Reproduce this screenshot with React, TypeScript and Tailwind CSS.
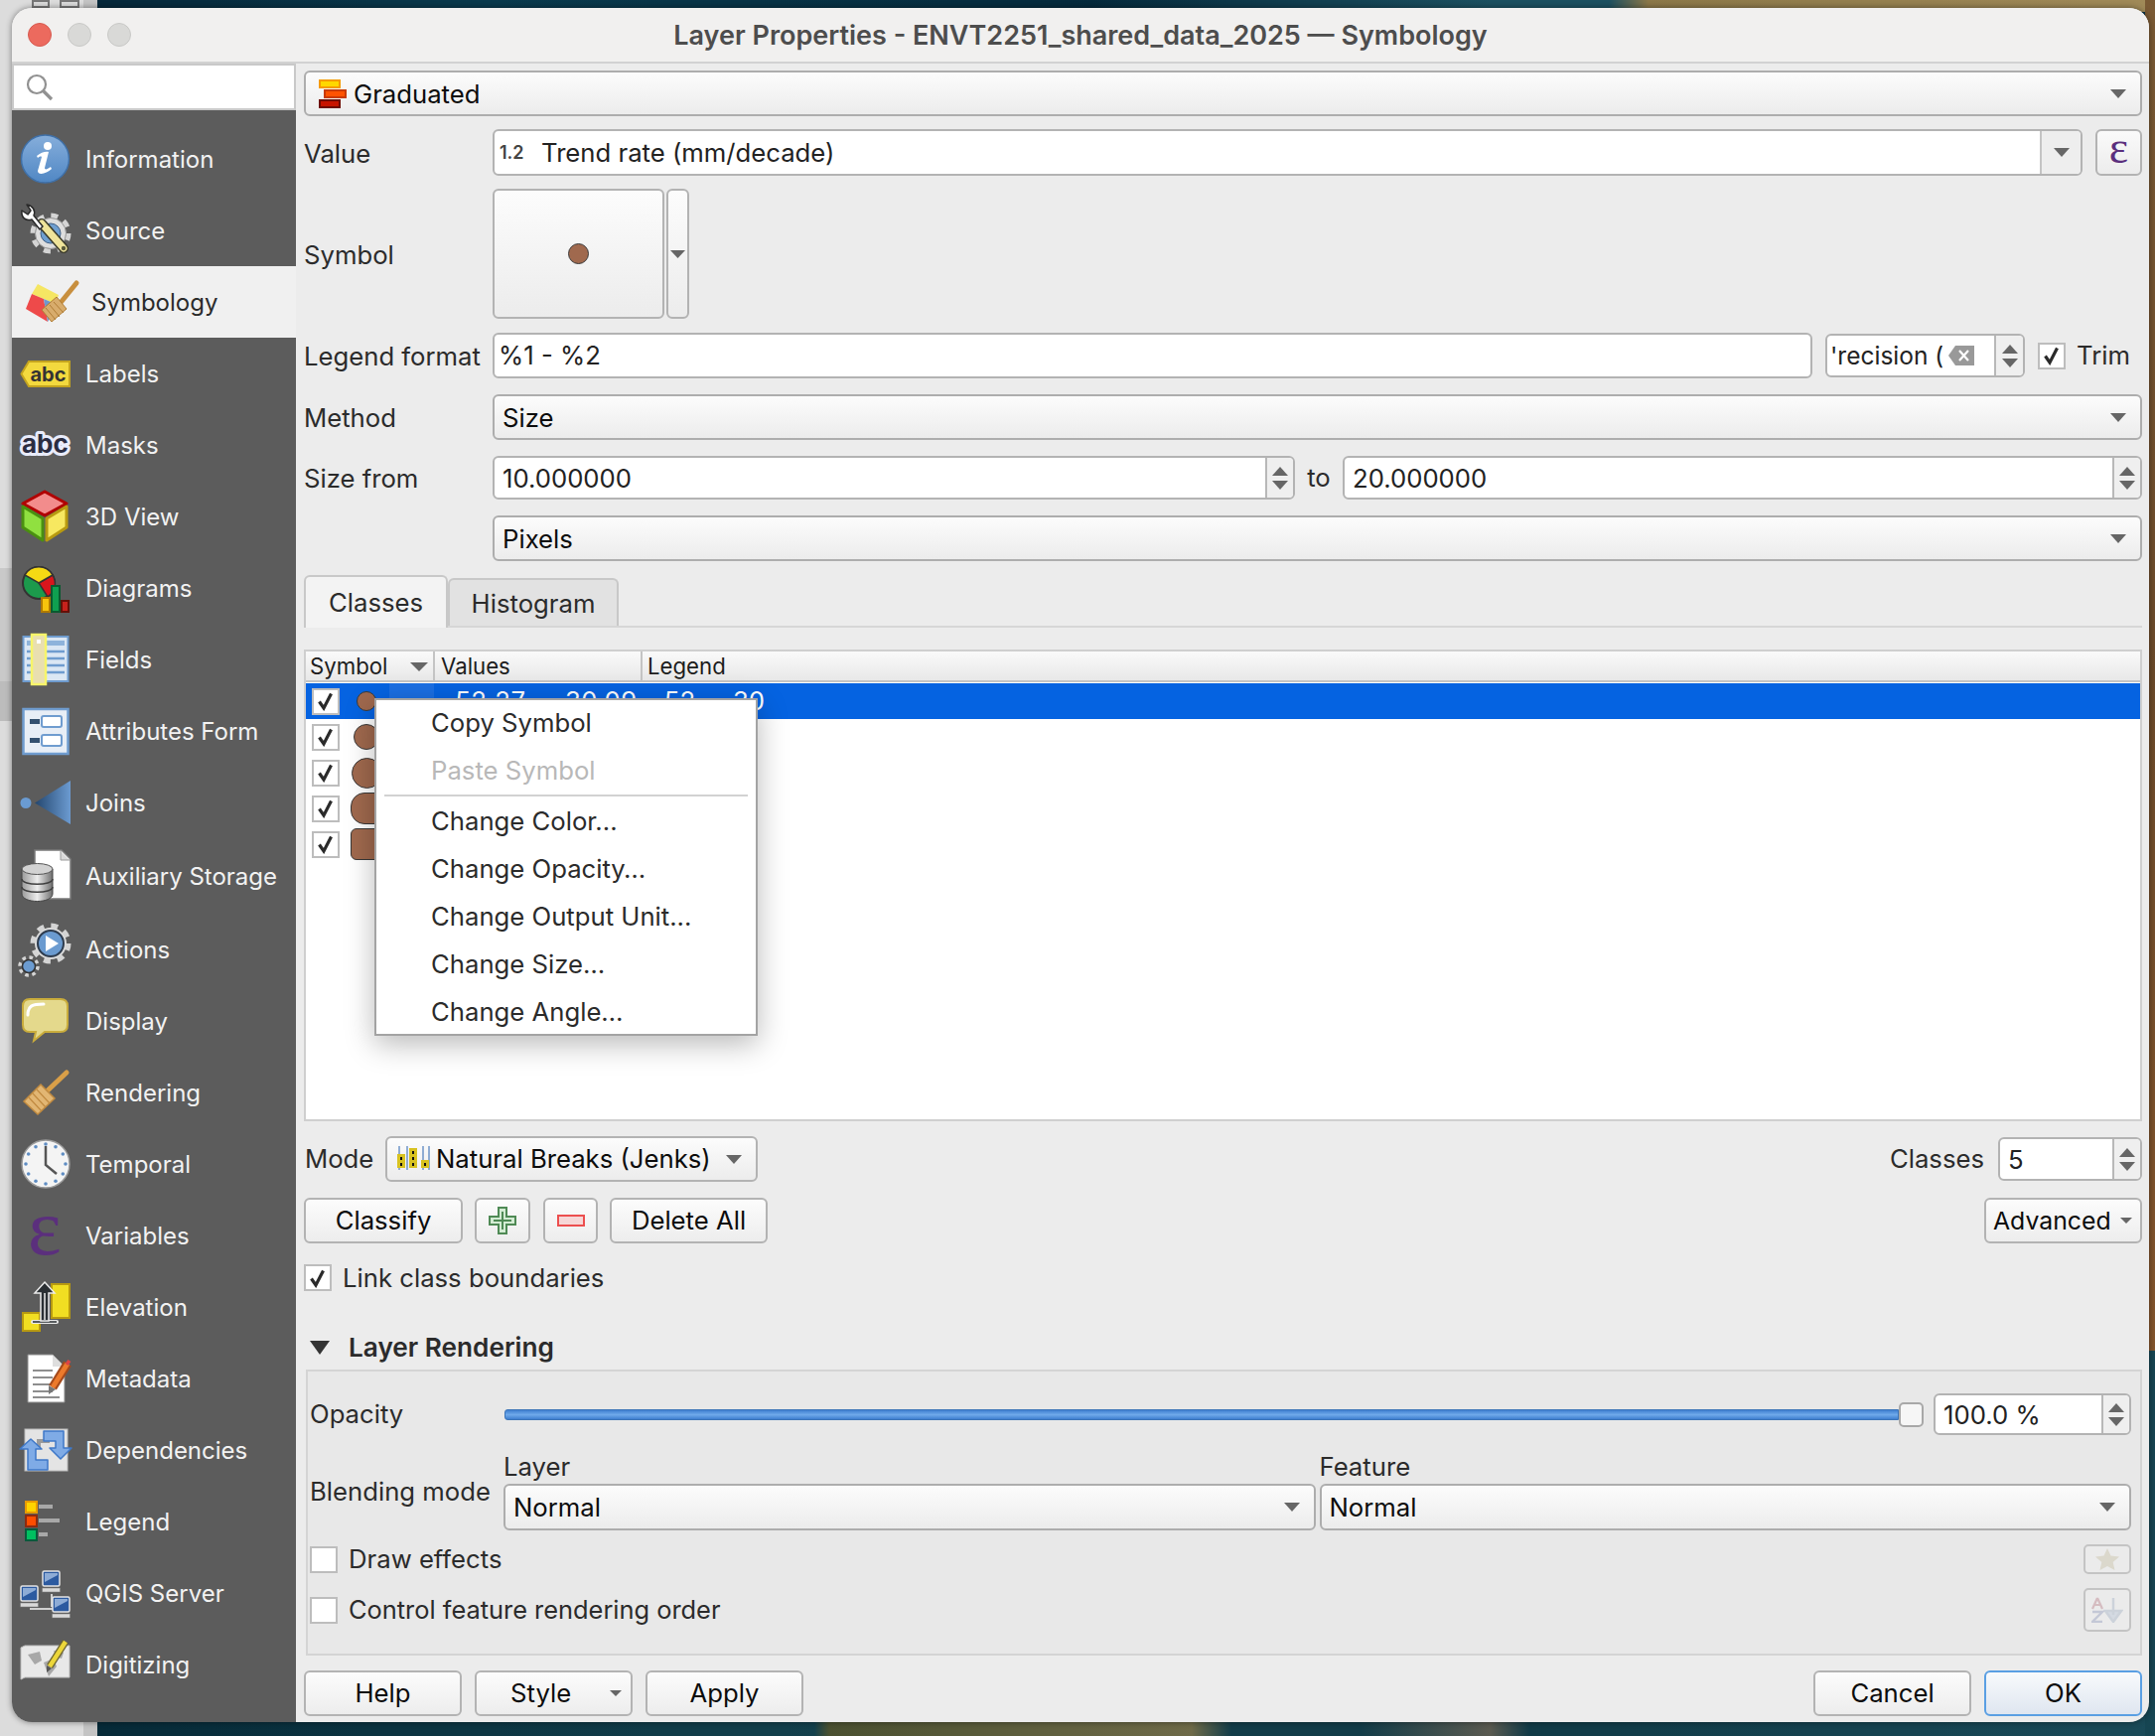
import React from "react";

const Tri = ({ w = 16, h = 9, c = "#666", up = false }: { w?: number; h?: number; c?: string; up?: boolean }) => (
  <svg width={w} height={h} viewBox="0 0 16 9" preserveAspectRatio="none" className="shrink-0">
    <path d={up ? "M8 0L16 9H0Z" : "M0 0H16L8 9Z"} fill={c} />
  </svg>
);

const Check = () => (
  <svg width="20" height="20" viewBox="0 0 20 20">
    <path d="M3.5 10.5 L8 17 L15.5 2.5" fill="none" stroke="#2a2a2a" strokeWidth="3.2" strokeLinejoin="miter" />
  </svg>
);

const Box = ({ on = false }: { on?: boolean }) => (
  <div className="w-[28px] h-[27px] shrink-0 bg-white border-2 border-[#bdbdbd] flex items-center justify-center">
    {on && <Check />}
  </div>
);

const Combo = ({ children, className = "" }: { children: React.ReactNode; className?: string }) => (
  <div className={"rounded-[6px] border-2 border-[#adadad] bg-[linear-gradient(#fcfcfc,#ececec)] flex items-center pl-[8px] pr-[14px] justify-between text-[#0c0c0c] " + className}>
    <div className="flex items-center min-w-0 pt-[1px]">{children}</div>
    <Tri />
  </div>
);

const Spin = ({ value, className = "", inner = "" }: { value: string; className?: string; inner?: string }) => (
  <div className={"rounded-[6px] border-2 border-[#b3b3b3] bg-white flex items-stretch overflow-hidden " + className}>
    <div className={"flex-1 flex items-center pl-[8px] pt-[1px] text-[#222] " + inner}>{value}</div>
    <div className="w-[28px] border-l-2 border-[#b8b8b8] bg-[#efefef] flex flex-col items-center justify-center gap-[5px]">
      <Tri up w={16} h={9} c="#666" />
      <Tri w={16} h={9} c="#666" />
    </div>
  </div>
);

const Btn = ({ children, className = "" }: { children: React.ReactNode; className?: string }) => (
  <div className={"h-[46px] rounded-[6px] border-2 flex items-center justify-center text-[#0c0c0c] shrink-0 " + className}>
    {children}
  </div>
);
const plain = "border-[#b3b3b3] bg-[linear-gradient(#fcfcfc,#ededed)] ";

const Ic = ({ children }: { children: React.ReactNode }) => (
  <svg width="52" height="56" viewBox="0 0 52 56" className="shrink-0 overflow-visible">
    {children}
  </svg>
);

const sans = "Inter, sans-serif";

const icons: Record<string, React.ReactNode> = {
  Information: (
    <Ic>
      <defs>
        <linearGradient id="gi" x1="0" y1="0" x2="0" y2="1">
          <stop offset="0" stopColor="#86aedb" />
          <stop offset="1" stopColor="#5087c4" />
        </linearGradient>
      </defs>
      <circle cx="25.5" cy="28" r="24" fill="url(#gi)" stroke="#3f70a8" strokeWidth="1.5" />
      <circle cx="28" cy="15" r="4" fill="#fff" />
      <path d="M17 25 C21 21 27 20 29 21 L25 37 C25 39 27 39 31 36 L32 38 C27 43 18 45 18 40 L22 26 C21 25 19 26 18 27 Z" fill="#fff" />
    </Ic>
  ),
  Source: (
    <Ic>
      <circle cx="31" cy="31" r="18" fill="none" stroke="#d4d4d4" strokeWidth="5" strokeDasharray="7 7.1" />
      <circle cx="31" cy="31" r="15.5" fill="#dedede" stroke="#9a9a9a" />
      <circle cx="31" cy="31" r="10" fill="#6f9fd0" stroke="#3e5f86" />
      <path d="M22 21 L44 46" stroke="#3a3a2a" strokeWidth="10" strokeLinecap="round" />
      <path d="M22 21 L44 46" stroke="#efe49a" strokeWidth="7" strokeLinecap="round" />
      <circle cx="44" cy="46" r="2.2" fill="#5a5a3a" />
      <path d="M23 24 L14 13 C16 8 13 3 7 2 L11 8 L8 12 L2 8 C1 15 6 19 12 17 L20 27 Z" fill="#fff" stroke="#2a2a2a" strokeWidth="1.5" strokeLinejoin="round" />
    </Ic>
  ),
  Symbology: (
    <Ic>
      <path d="M12 10 L33 21 L30 30 L6 20 Z" fill="#f5e663" />
      <path d="M6 20 L18 25 L22 48 L0 35 Z" fill="#ee4a4a" />
      <path d="M18 25 L30 30 L27 40 L22 48 Z" fill="#6f97cf" />
      <path d="M34 30 L51 9" stroke="#c88f3e" strokeWidth="5" strokeLinecap="round" />
      <path d="M16 36 L31 23 L41 35 L26 48 Z" fill="#d8ac6c" stroke="#b07d35" strokeWidth="1" />
      <path d="M20 34 L30 46 M24 31 L34 43 M28 28 L38 39" stroke="#b07d35" strokeWidth="1" />
    </Ic>
  ),
  Labels: (
    <Ic>
      <path d="M1.5 28.5 L9 16 H50 V41 H9 Z" fill="#f3d93e" stroke="#c4a41f" strokeWidth="2" />
      <text x="10.5" y="36" fontFamily={sans} fontWeight="700" fontSize="20" fill="#333">abc</text>
    </Ic>
  ),
  Masks: (
    <Ic>
      <text x="2" y="36" fontFamily={sans} fontWeight="700" fontSize="26" fill="#2b2d42" stroke="#e9ecfb" strokeWidth="6" strokeLinejoin="round" paintOrder="stroke">abc</text>
    </Ic>
  ),
  "3D View": (
    <Ic>
      <path d="M25 3 L47 15 L25 27 L3 15 Z" fill="#f28c8c" stroke="#b00000" strokeWidth="3" strokeLinejoin="round" />
      <path d="M3 18 L23 30 V52 L3 39 Z" fill="#90e040" stroke="#4a9010" strokeWidth="3" strokeLinejoin="round" />
      <path d="M27 30 L47 18 V39 L27 52 Z" fill="#f7e860" stroke="#b89a10" strokeWidth="3" strokeLinejoin="round" />
    </Ic>
  ),
  Diagrams: (
    <Ic>
      <circle cx="19" cy="23" r="16" fill="#1c9a4c" stroke="#333" strokeWidth="2" />
      <path d="M19 23 L33 15 A16 16 0 0 1 28 37 Z" fill="#d9151c" stroke="#333" strokeWidth="1.5" />
      <path d="M19 23 L33 15 A16 16 0 0 0 5 15 Z" fill="#f5d914" stroke="#333" strokeWidth="1.5" />
      <rect x="22" y="38" width="8" height="14" fill="#f7c40d" stroke="#b07a00" strokeWidth="2" />
      <rect x="32" y="26" width="8" height="26" fill="#0fa050" stroke="#0a5a30" strokeWidth="2" />
      <rect x="42" y="41" width="7" height="11" fill="#c7221c" stroke="#651008" strokeWidth="2" />
    </Ic>
  ),
  Fields: (
    <Ic>
      <rect x="3.5" y="5" width="45" height="45" fill="#dbe7f4" stroke="#6f9ccf" strokeWidth="2" />
      <rect x="7" y="9" width="38" height="5" fill="#8eb3db" />
      <path d="M7 20H45 M7 27H45 M7 34H45 M7 41H45" stroke="#6f9ccf" strokeWidth="2.5" />
      <rect x="12" y="3" width="14" height="50" fill="#e9dfb0" stroke="#f7f56a" strokeWidth="2.5" />
      <rect x="17" y="8" width="4" height="4" fill="#fff" />
    </Ic>
  ),
  "Attributes Form": (
    <Ic>
      <rect x="3.5" y="6" width="45" height="45" fill="#e8eef6" stroke="#6f9ccf" strokeWidth="2.5" />
      <rect x="10" y="16" width="10" height="5" fill="#34506f" />
      <rect x="10" y="35" width="10" height="5" fill="#34506f" />
      <rect x="22" y="13" width="20" height="11" rx="2" fill="#fff" stroke="#6f9ccf" strokeWidth="2" />
      <rect x="22" y="32" width="20" height="11" rx="2" fill="#fff" stroke="#6f9ccf" strokeWidth="2" />
    </Ic>
  ),
  Joins: (
    <Ic>
      <defs>
        <linearGradient id="gj" x1="0" y1="0" x2="1" y2="0">
          <stop offset="0" stopColor="#23466e" />
          <stop offset="1" stopColor="#6c9bd1" />
        </linearGradient>
      </defs>
      <circle cx="6" cy="28.5" r="5.5" fill="#6a9bd2" />
      <path d="M15 28.5 L51 6 V50 Z" fill="url(#gj)" />
    </Ic>
  ),
  "Auxiliary Storage": (
    <Ic>
      <defs>
        <linearGradient id="ga" x1="0" y1="0" x2="1" y2="0">
          <stop offset="0" stopColor="#9a9a9a" />
          <stop offset=".5" stopColor="#ececec" />
          <stop offset="1" stopColor="#6f6f6f" />
        </linearGradient>
      </defs>
      <path d="M15 2 H42 L51 11 V51 H15 Z" fill="#fff" stroke="#7a7a7a" strokeWidth="1.5" />
      <path d="M41 3 V12 H50" fill="#d9d9d9" stroke="#999" />
      <path d="M2 21 V46 C2 56 33 56 33 46 V21 Z" fill="url(#ga)" stroke="#444" strokeWidth="1" />
      <ellipse cx="17.5" cy="21" rx="15.5" ry="5.5" fill="#d2d2d2" stroke="#555" strokeWidth="1" />
      <path d="M2 31 C2 38 33 38 33 31 M2 39 C2 46 33 46 33 39" fill="none" stroke="#3f3f3f" strokeWidth="1.5" />
    </Ic>
  ),
  Actions: (
    <Ic>
      <circle cx="31" cy="22" r="18" fill="none" stroke="#d4d4d4" strokeWidth="5" strokeDasharray="7 7.1" />
      <circle cx="31" cy="22" r="16" fill="#dcdcdc" />
      <circle cx="31" cy="22" r="13" fill="#6b9bd0" stroke="#2e3c4e" strokeWidth="2" />
      <path d="M26 14 L39 22 L26 30 Z" fill="#fff" />
      <circle cx="9" cy="45" r="9" fill="none" stroke="#d4d4d4" strokeWidth="3.5" strokeDasharray="3.6 3.5" />
      <circle cx="9" cy="45" r="6.5" fill="#6b9bd0" stroke="#333" strokeWidth="1.5" />
    </Ic>
  ),
  Display: (
    <Ic>
      <path d="M10 6 H41 Q48 6 48 13 V32 Q48 39 41 39 H25 L14 48 L16 39 H10 Q3 39 3 32 V13 Q3 6 10 6 Z" fill="#e4d98c" stroke="#c9ac3c" strokeWidth="2" />
      <path d="M8 22 C8 13 12 11 24 11" fill="none" stroke="#fff" strokeWidth="3" strokeLinecap="round" />
    </Ic>
  ),
  Rendering: (
    <Ic>
      <path d="M28 26 L47 8" stroke="#d99f48" strokeWidth="5" strokeLinecap="round" />
      <path d="M4 37 L21 20 L35 34 L18 50 Z" fill="#e2b673" stroke="#c08a40" strokeWidth="1.5" />
      <path d="M9 33 L22 47 M13 29 L26 43 M17 25 L30 39" stroke="#c08a40" strokeWidth="1.2" />
    </Ic>
  ),
  Temporal: (
    <Ic>
      <circle cx="26" cy="28" r="24" fill="#f4f4f4" stroke="#9a9a9a" strokeWidth="1.5" />
      {[...Array(12)].map((_, i) => {
        const a = (i * Math.PI) / 6;
        return <circle key={i} cx={26 + 20 * Math.cos(a)} cy={28 + 20 * Math.sin(a)} r="1.8" fill="#5f8dc3" />;
      })}
      <path d="M26 10 V29 L37 38" fill="none" stroke="#555" strokeWidth="2.5" />
    </Ic>
  ),
  Variables: (
    <Ic>
      <text x="8" y="47" fontFamily="'Liberation Serif', serif" fontSize="80" fill="#5b2f7d">ε</text>
    </Ic>
  ),
  Elevation: (
    <Ic>
      <rect x="32" y="5" width="18" height="34" fill="#f1de22" stroke="#b89a10" strokeWidth="2" />
      <rect x="3" y="34" width="17" height="18" fill="#f1de22" stroke="#b89a10" strokeWidth="2" />
      <path d="M13 43 H37" stroke="#e8e8e8" strokeWidth="4" strokeLinecap="round" />
      <path d="M13 43 H37" stroke="#2a2f33" strokeWidth="1.5" />
      <path d="M25 3 L35 14 H29 V42 H21 V14 H15 Z" fill="#2a2f33" stroke="#ececec" strokeWidth="1.5" />
      <path d="M25 14 V41" stroke="#ececec" strokeWidth="1.5" />
    </Ic>
  ),
  Metadata: (
    <Ic>
      <path d="M8 4 H33 L45 16 V52 H8 Z" fill="#fff" stroke="#8a8a8a" />
      <path d="M33 4 V16 H45" fill="#dedede" />
      <path d="M13 20H33 M13 27H33 M13 34H31 M13 41H33 M13 47H40" stroke="#8e8e8e" strokeWidth="2" />
      <path d="M48 13 L33 37" stroke="#a44a1c" strokeWidth="9" />
      <path d="M48 13 L33 37" stroke="#ec7a2c" strokeWidth="5" />
      <path d="M47 11 L50 13" stroke="#d44" strokeWidth="5" />
      <path d="M29 35 L36 39 L29 44 Z" fill="#777" />
    </Ic>
  ),
  Dependencies: (
    <Ic>
      <rect x="5" y="7" width="43" height="42" fill="#e4e4e4" stroke="#bcbcbc" />
      <path d="M19 27 V19 H30" fill="none" stroke="#9a9a9a" strokeWidth="4" />
      <path d="M0 27 L11 17 L22 27 H16 V38 H28 V48 H8 V27 Z" fill="#7fabe6" stroke="#3f78c8" strokeWidth="1.5" strokeLinejoin="round" />
      <path d="M24 9 H44 V26 H52 L41 37 L30 26 H36 V19 H24 Z" fill="#7fabe6" stroke="#3f78c8" strokeWidth="1.5" strokeLinejoin="round" />
    </Ic>
  ),
  Legend: (
    <Ic>
      <rect x="6" y="8" width="11" height="11" fill="#ffd400" stroke="#e89a00" strokeWidth="2" />
      <rect x="6" y="22" width="11" height="11" fill="#ff4d00" stroke="#8c2a10" strokeWidth="2" />
      <rect x="6" y="36" width="11" height="11" fill="#00c060" stroke="#0a5a3c" strokeWidth="2" />
      <rect x="19" y="11" width="14" height="4" fill="#a8a8a8" />
      <rect x="19" y="25" width="21" height="4" fill="#a8a8a8" />
      <rect x="19" y="39" width="9" height="4" fill="#a8a8a8" />
    </Ic>
  ),
  "QGIS Server": (
    <Ic>
      <path d="M32 29 V42 M10 44 H33" stroke="#cfcfcf" strokeWidth="2" />
      {[[23, 6], [1, 21], [33, 32]].map(([x, y], i) => (
        <g key={i}>
          <rect x={x} y={y} width="17" height="15" rx="1.5" fill="#2c5aa0" stroke="#e4e4e4" strokeWidth="1.5" />
          <path d={`M${x + 2} ${y + 11} L${x + 15} ${y + 4} V${y + 2} H${x + 2} Z`} fill="#8eacd6" />
          <rect x={x - 0.5} y={y + 17} width="18" height="4" fill="#d9d9d9" stroke="#777" strokeWidth=".5" />
        </g>
      ))}
    </Ic>
  ),
  Digitizing: (
    <Ic>
      <path d="M1 11 L5 9 H50 V41 H5 L1 43 Z" fill="#e8e8e8" stroke="#bdbdbd" />
      <path d="M8 18 L20 15 L22 24 L15 28 Z M24 26 L34 22 L37 30 L29 40 Z M34 14 L44 16 L42 22 L36 20 Z" fill="#a8a8a8" />
      <path d="M46 5 L30 30" stroke="#6b6330" strokeWidth="7" />
      <path d="M46 5 L30 30" stroke="#ecd63a" strokeWidth="4.5" />
      <path d="M27 29 L32 32 L27 36 Z" fill="#555" />
    </Ic>
  ),
};

const items = ["Information", "Source", "Symbology", "Labels", "Masks", "3D View", "Diagrams", "Fields", "Attributes Form", "Joins", "Auxiliary Storage", "Actions", "Display", "Rendering", "Temporal", "Variables", "Elevation", "Metadata", "Dependencies", "Legend", "QGIS Server", "Digitizing"];

const Row = ({ label, children, className = "" }: { label: string; children: React.ReactNode; className?: string }) => (
  <div className={"flex items-center " + className}>
    <div className="w-[190px] shrink-0 pt-[2px] text-[#2b2b2b]">{label}</div>
    <div className="flex-1 flex items-center min-w-0">{children}</div>
  </div>
);

const symbols = [
  "w-[20px] h-[20px] rounded-full",
  "w-[26px] h-[26px] rounded-full",
  "w-[31px] h-[31px] rounded-full",
  "w-[32px] h-[32px] rounded-l-[14px]",
  "w-[32px] h-[32px] rounded-l-[6px]",
];

const menu: [string, boolean?][] = [["Copy Symbol"], ["Paste Symbol", true]];
const menu2 = ["Change Color...", "Change Opacity…", "Change Output Unit...", "Change Size…", "Change Angle…"];

export default function App() {
  return (
    <div className="relative w-[2170px] h-[1748px] overflow-hidden bg-[#0c3446] font-['Inter',sans-serif] text-[25.7px] leading-none">
      {/* desktop behind the window */}
      <div className="absolute inset-x-0 top-0 h-[12px] bg-[linear-gradient(90deg,#06283a_100px,#0a3a4d_500px,#052a3c_1100px,#1c5060_1500px,#1c5060_1620px,#8b7748_1660px,#a08a58_2170px)]" />
      <div className="absolute inset-x-0 bottom-0 h-[20px] bg-[linear-gradient(90deg,#062a38_100px,#13404c_820px,#4a5030_835px,#6e6a48_1200px,#123c48_1240px,#123c48_1370px,#5a5a50_1500px,#103a46_1540px,#1a4a58_2170px)]" />
      <div className="absolute right-0 top-0 w-[10px] h-[1360px] bg-[linear-gradient(#7a5a34,#6b4a2a_50%,#84552c)]" />
      <div className="absolute right-0 top-[1360px] w-[10px] bottom-0 bg-[#164552]" />
      <div className="absolute left-0 top-0 bottom-0 w-[98px] bg-[#dcdcdc] border-r-[14px] border-[#c4c4c4]" />
      <div className="absolute left-0 top-[572px] w-[12px] h-[114px] bg-[#c9c9c9]" />
      <div className="absolute left-0 top-[686px] w-[12px] h-[40px] bg-[#bcbcbc]" />
      <div className="absolute left-[32px] top-0 w-[18px] h-[8px] border-2 border-[#777]" />
      <div className="absolute left-[60px] top-0 w-[20px] h-[8px] border-2 border-[#777]" />

      {/* window */}
      <div className="relative ml-[12px] mt-[8px] w-[2152px] h-[1726px] rounded-[20px] overflow-hidden flex flex-col bg-[#ececec] shadow-[0_0_6px_rgba(0,0,0,0.45)]">
        <div className="h-[56px] shrink-0 flex items-center bg-[#f1f0ef] border-b-2 border-[#d2d2d2]">
          <div className="flex-1 flex items-center gap-[16px] pl-[16px]">
            <div className="w-[24px] h-[24px] rounded-full bg-[#ec6a5e] border border-[#d65a50]" />
            <div className="w-[24px] h-[24px] rounded-full bg-[#d9d9d7] border border-[#c8c8c6]" />
            <div className="w-[24px] h-[24px] rounded-full bg-[#d9d9d7] border border-[#c8c8c6]" />
          </div>
          <div className="mr-[16px] font-semibold text-[#4d4d4d] text-[27px] whitespace-nowrap">Layer Properties - ENVT2251_shared_data_2025 — Symbology</div>
          <div className="flex-1" />
        </div>

        <div className="flex-1 flex min-h-0">
          {/* sidebar */}
          <div className="w-[286px] shrink-0 bg-[#5c5c5c] flex flex-col">
            <div className="h-[47px] shrink-0 bg-white border-2 border-[#c9c9c9] flex items-center pl-[12px]">
              <svg width="28" height="28" viewBox="0 0 28 28" fill="none" stroke="#919191" strokeWidth="2.2">
                <circle cx="11" cy="11" r="9" />
                <path d="M17.5 17.5 L26 26" strokeWidth="3.2" />
              </svg>
            </div>
            <div className="pt-[13px] flex flex-col">
              {items.map((n) => {
                const sel = n === "Symbology";
                return (
                  <div key={n} className={"flex items-center shrink-0 " + (n === "Auxiliary Storage" ? "h-[76px] " : "h-[72px] ") + (sel ? "bg-[#f0f0f0] text-[#2b2b2b] pl-[14px]" : "text-[#f2f2f2] pl-[8px]")}>
                    {icons[n]}
                    <span className="ml-[14px] pt-[1px] text-[24px] whitespace-nowrap">{n}</span>
                  </div>
                );
              })}
            </div>
          </div>

          {/* main */}
          <div className="flex-1 min-w-0 flex flex-col pl-[8px] pr-[7px]">
            <Combo className="mt-[7px] h-[46px] shrink-0">
              <svg width="28" height="30" viewBox="0 0 28 30" className="ml-[5px] mr-[7px]">
                <rect x="1" y="1" width="20" height="7" fill="#ffd800" stroke="#f59b00" strokeWidth="2" />
                <rect x="6" y="11" width="21" height="7" fill="#ff5200" stroke="#c83a00" strokeWidth="2" />
                <rect x="1" y="21" width="20" height="7" fill="#c81400" stroke="#6e0c00" strokeWidth="2" />
              </svg>
              Graduated
            </Combo>

            <Row label="Value" className="mt-[13px] h-[47px] shrink-0">
              <div className="flex-1 h-[47px] rounded-[6px] border-2 border-[#b3b3b3] bg-white flex items-center overflow-hidden">
                <span className="ml-[5px] w-[36px] text-[18px] font-semibold text-[#444]">1.2</span>
                <span className="ml-[6px] flex-1 pt-[1px] text-[#222]">Trend rate (mm/decade)</span>
                <div className="w-[41px] self-stretch border-l-2 border-[#c4c4c4] bg-[#eeeeee] flex items-center justify-center">
                  <Tri />
                </div>
              </div>
              <div className="ml-[13px] w-[47px] h-[47px] rounded-[6px] border-2 border-[#b3b3b3] bg-[linear-gradient(#fafafa,#ececec)] flex items-center justify-center font-['Liberation_Serif',serif] text-[#5b2f7d] text-[46px] pb-[9px]">ε</div>
            </Row>

            <Row label="Symbol" className="mt-[13px] h-[131px] shrink-0">
              <div className="w-[173px] h-[131px] rounded-[6px] border-2 border-[#b3b3b3] bg-[linear-gradient(#fcfcfc,#ececec)] flex items-center justify-center">
                <div className="w-[21px] h-[21px] rounded-full bg-[#a0694e] border border-[#3a3a3a]" />
              </div>
              <div className="ml-[2px] w-[23px] h-[131px] rounded-[6px] border-2 border-[#b3b3b3] bg-[linear-gradient(#fcfcfc,#ececec)] flex items-center justify-center">
                <Tri w={15} h={8} />
              </div>
            </Row>

            <Row label="Legend format" className="mt-[14px] h-[46px] shrink-0">
              <div className="w-[1329px] h-[46px] rounded-[6px] border-2 border-[#b3b3b3] bg-white flex items-center pl-[4px] text-[#222]">%1 - %2</div>
              <div className="ml-[13px] w-[201px] h-[44px] rounded-[6px] border-2 border-[#b3b3b3] bg-white flex items-stretch overflow-hidden">
                <div className="w-[116px] pl-[3px] pt-[1px] flex items-center overflow-hidden whitespace-nowrap text-[#222] text-[24.5px]">'recision (</div>
                <div className="w-[52px] flex items-center pl-[6px]">
                  <svg width="26" height="20" viewBox="0 0 26 20">
                    <path d="M7 0 H26 V20 H7 L0 10 Z" fill="#999" />
                    <path d="M11 5 L20 15 M20 5 L11 15" stroke="#fff" strokeWidth="2.2" />
                  </svg>
                </div>
                <div className="flex-1 border-l-2 border-[#b8b8b8] bg-[#efefef] flex flex-col items-center justify-center gap-[5px]">
                  <Tri up />
                  <Tri />
                </div>
              </div>
              <div className="ml-[13px]"><Box on /></div>
              <span className="ml-[11px] text-[#2b2b2b]">Trim</span>
            </Row>

            <Row label="Method" className="mt-[16px] h-[46px] shrink-0">
              <Combo className="flex-1 h-[46px]">Size</Combo>
            </Row>

            <Row label="Size from" className="mt-[16px] h-[44px] shrink-0">
              <Spin value="10.000000" className="w-[808px] h-[44px]" />
              <span className="w-[48px] text-center text-[#2b2b2b]">to</span>
              <Spin value="20.000000" className="flex-1 h-[44px]" />
            </Row>

            <div className="mt-[16px] pl-[190px] shrink-0">
              <Combo className="h-[46px]">Pixels</Combo>
            </div>

            {/* tabs */}
            <div className="mt-[14px] h-[53px] shrink-0 flex items-end border-b-2 border-[#d6d6d6]">
              <div className="w-[145px] h-[53px] -mb-[2px] rounded-t-[6px] border-2 border-b-0 border-[#c8c8c8] bg-[#f3f3f3] flex items-center justify-center text-[#2b2b2b]">Classes</div>
              <div className="w-[172px] h-[48px] pt-[1px] rounded-t-[6px] border-2 border-b-0 border-[#c8c8c8] bg-[#e2e2e2] flex items-center justify-center text-[#2b2b2b]">Histogram</div>
            </div>

            {/* table */}
            <div className="relative mt-[22px] h-[475px] shrink-0 border-2 border-[#cfcfcf] bg-white">
              <div className="h-[31px] flex text-[22.2px] text-[#1c1c1c] bg-[linear-gradient(#fafafa,#e8e8e8)] border-b-2 border-[#c4c4c4]">
                <div className="w-[130px] pl-[4px] pt-[1px] flex items-center justify-between pr-[5px] border-r-2 border-[#c4c4c4]">
                  Symbol
                  <Tri w={18} h={9} />
                </div>
                <div className="w-[209px] pl-[6px] pt-[1px] flex items-center border-r-2 border-[#c4c4c4]">Values</div>
                <div className="flex-1 pl-[5px] pt-[1px] flex items-center">Legend</div>
              </div>
              <div className="pt-[1px] flex flex-col">
                {symbols.map((s, i) => (
                  <div key={i} className={"h-[36px] flex items-center pl-[6px] text-[25.7px] " + (i === 0 ? "bg-[#0563e1] text-white" : "text-[#222]")}>
                    <Box on />
                    <div className="ml-[11px] w-[32px] flex justify-center">
                      <div className={"bg-[#a0694e] border border-[#3a3a3a] " + s} />
                    </div>
                    <div className={"ml-[7px] w-[45px] self-stretch " + (i === 0 ? "bg-[#1b6fe3]" : "")} />
                    {i === 0 && <div className="w-[215px] pl-[9px] whitespace-nowrap tracking-[0.45px]">-52.27 - -30.09</div>}
                    {i === 0 && <div className="pl-[5px] whitespace-nowrap">-52 - -30</div>}
                  </div>
                ))}
              </div>

              {/* context menu */}
              <div className="absolute left-[69px] top-[47px] w-[386px] h-[340px] overflow-hidden bg-white border-2 border-[#a3a3a3] shadow-[0_8px_28px_rgba(0,0,0,0.28)] text-[#2b2b2b] flex flex-col">
                <div className="-mt-[1px]" />
                {menu.map(([t, dis]) => (
                  <div key={t} className={"h-[48px] shrink-0 flex items-center pl-[55px] " + (dis ? "text-[#b8b8b8]" : "")}>{t}</div>
                ))}
                <div className="mx-[8px] h-[2px] shrink-0 bg-[#d2d2d2]" />
                <div className="h-[1px] shrink-0" />
                {menu2.map((t) => (
                  <div key={t} className="h-[48px] shrink-0 flex items-center pl-[55px]">{t}</div>
                ))}
              </div>
            </div>

            {/* mode */}
            <div className="mt-[15px] h-[46px] shrink-0 flex items-center">
              <span className="w-[82px] text-[#2b2b2b] pl-[1px]">Mode</span>
              <div className="w-[375px] h-[46px] rounded-[6px] border-2 border-[#b3b3b3] bg-[linear-gradient(#fcfcfc,#ececec)] flex items-center pl-[10px] text-[#0c0c0c]">
                <svg width="34" height="26" viewBox="0 0 34 26" className="mr-[5px] shrink-0">
                  <path d="M2 0V24 M10 0V24 M26 0V24 M32 0V24" stroke="#6d94c8" strokeWidth="1.5" />
                  <rect x="0" y="8" width="8" height="14" fill="#d8c220" />
                  <rect x="12" y="2" width="8" height="20" fill="#d8c220" />
                  <rect x="24" y="14" width="8" height="8" fill="#d8c220" />
                  <path d="M3 11h2v3H3z M3 17h2v3H3z M15 5h2v3h-2z M15 11h2v3h-2z M15 17h2v3h-2z M27 17h2v3h-2z" fill="#111" />
                </svg>
                <span className="whitespace-nowrap">Natural Breaks (Jenks)</span>
                <div className="ml-auto pr-[14px]"><Tri /></div>
              </div>
              <div className="flex-1" />
              <span className="text-[#2b2b2b] mr-[14px]">Classes</span>
              <Spin value="5" className="w-[145px] h-[44px]" />
            </div>

            {/* buttons */}
            <div className="mt-[16px] h-[46px] shrink-0 flex items-center">
              <Btn className={plain + "w-[160px]"}>Classify</Btn>
              <Btn className={plain + "w-[56px] ml-[12px]"}>
                <svg width="28" height="28" viewBox="0 0 28 28">
                  <path d="M10 1 H18 V10 H27 V18 H18 V27 H10 V18 H1 V10 H10 Z" fill="#d3ecd3" stroke="#4f8a55" strokeWidth="2" />
                  <path d="M14 5V23 M5 14H23" stroke="#4f8a55" strokeWidth="2" />
                </svg>
              </Btn>
              <Btn className={plain + "w-[55px] ml-[13px]"}>
                <svg width="28" height="12" viewBox="0 0 28 12">
                  <rect x="1" y="1" width="26" height="10" fill="#f6d7d7" stroke="#ec4f4f" strokeWidth="2" />
                </svg>
              </Btn>
              <Btn className={plain + "w-[159px] ml-[12px]"}>Delete All</Btn>
              <div className="flex-1" />
              <div className="w-[159px] h-[46px] rounded-[6px] border-2 border-[#b3b3b3] bg-[linear-gradient(#fcfcfc,#ededed)] flex items-center justify-between pl-[7px] pr-[8px] text-[#0c0c0c] text-[24.8px]">
                Advanced
                <Tri w={12} h={6} />
              </div>
            </div>

            {/* link */}
            <div className="mt-[21px] h-[27px] shrink-0 flex items-center gap-[11px] text-[#2b2b2b]">
              <Box on />
              Link class boundaries
            </div>

            {/* layer rendering */}
            <div className="mt-[45px] h-[24px] shrink-0 flex items-center">
              <div className="ml-[6px] mr-[19px]"><Tri w={20} h={14} c="#333" /></div>
              <span className="font-semibold text-[#2b2b2b] text-[26.2px]">Layer Rendering</span>
            </div>
            <div className="mt-[10px] ml-[2px] h-[288px] shrink-0 border-2 border-[#d4d4d4] bg-[#e8e8e8] pl-[2px] pr-[9px] flex flex-col text-[#2b2b2b]">
              <div className="mt-[22px] h-[42px] shrink-0 flex items-center">
                <span className="w-[196px] shrink-0">Opacity</span>
                <div className="flex-1 h-[11px] rounded-l-[3px] bg-[linear-gradient(#3f7fd0,#6fa9ea_50%,#3f7fd0)] border border-[#3b74b8]" />
                <div className="w-[25px] h-[25px] rounded-[5px] border-2 border-[#a8a8a8] bg-[#f6f6f6]" />
                <Spin value="100.0 %" className="ml-[10px] w-[199px] h-[42px] shrink-0" />
              </div>
              <div className="mt-[17px] flex items-center shrink-0">
                <span className="w-[195px] shrink-0">Blending mode</span>
                <div className="flex-1 flex gap-[4px]">
                  <div className="flex-1 min-w-0">
                    <div className="h-[32px] pb-[2px] flex items-center">Layer</div>
                    <Combo className="h-[47px]">Normal</Combo>
                  </div>
                  <div className="flex-1 min-w-0">
                    <div className="h-[32px] pb-[2px] flex items-center">Feature</div>
                    <Combo className="h-[47px]">Normal</Combo>
                  </div>
                </div>
              </div>
              <div className="mt-[14px] h-[30px] shrink-0 flex items-center">
                <Box />
                <span className="ml-[11px] flex-1">Draw effects</span>
                <div className="w-[48px] h-[30px] rounded-[5px] border-2 border-[#c4c4c4] bg-[#ebebeb] flex items-center justify-center">
                  <svg width="26" height="24" viewBox="0 0 26 24">
                    <path d="M13 1 L16.5 8.5 L25 9.5 L18.7 15 L20.5 23 L13 19 L5.5 23 L7.3 15 L1 9.5 L9.5 8.5 Z" fill="#dbd8cc" />
                  </svg>
                </div>
              </div>
              <div className="mt-[14px] h-[44px] shrink-0 flex items-center">
                <Box />
                <span className="ml-[11px] flex-1 text-[25.4px]">Control feature rendering order</span>
                <div className="w-[48px] h-[44px] rounded-[5px] border-2 border-[#c4c4c4] bg-[#ebebeb] flex items-center justify-center">
                  <svg width="32" height="26" viewBox="0 0 32 26">
                    <path d="M6 1 L1 12 M6 1 L11 12 M3 8H9" stroke="#d5bcc0" strokeWidth="2.2" fill="none" />
                    <path d="M1 15H11L1 25H11" stroke="#c4c8d6" strokeWidth="2.4" fill="none" />
                    <path d="M22 1V18 M14 14L22 25L30 14Z" stroke="#ccd2da" strokeWidth="2.5" fill="#d4dae2" />
                  </svg>
                </div>
              </div>
            </div>

            {/* bottom buttons */}
            <div className="mt-[15px] h-[46px] shrink-0 flex items-center">
              <Btn className={plain + "w-[159px]"}>Help</Btn>
              <div className="ml-[13px] w-[159px] h-[46px] rounded-[6px] border-2 border-[#b3b3b3] bg-[linear-gradient(#fcfcfc,#ededed)] flex items-center text-[#0c0c0c] pl-[34px] pr-[9px] justify-between">
                Style
                <Tri w={12} h={6} />
              </div>
              <Btn className={plain + "w-[159px] ml-[13px]"}>Apply</Btn>
              <div className="flex-1" />
              <Btn className={plain + "w-[159px]"}>Cancel</Btn>
              <Btn className="w-[159px] ml-[13px] border-[#5a9fe3] bg-[linear-gradient(#f8fafc,#dfe6f0)]">OK</Btn>
            </div>
          </div>
        </div>
      </div>
    </div>
  );
}
